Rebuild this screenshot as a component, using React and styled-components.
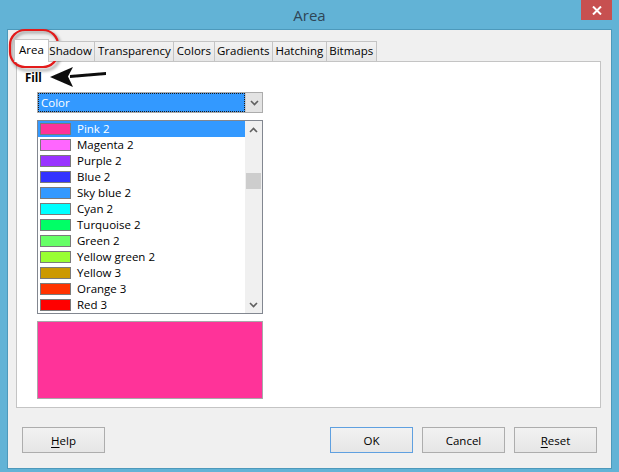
import React from "react";
import styled, { createGlobalStyle } from "styled-components";

const GlobalStyle = createGlobalStyle`
  html, body {
    margin: 0;
    padding: 0;
    background: #ffffff;
  }
  body {
    font-family: "Open Sans", "Noto Sans", sans-serif;
    font-size: 11.5px;
  }
`;

const tabs = ["Area", "Shadow", "Transparency", "Colors", "Gradients", "Hatching", "Bitmaps"];

const colors = [
  { name: "Pink 2", hex: "#ff3399" },
  { name: "Magenta 2", hex: "#ff66ff" },
  { name: "Purple 2", hex: "#9933ff" },
  { name: "Blue 2", hex: "#3333ff" },
  { name: "Sky blue 2", hex: "#3399ff" },
  { name: "Cyan 2", hex: "#00ffff" },
  { name: "Turquoise 2", hex: "#00ff66" },
  { name: "Green 2", hex: "#66ff66" },
  { name: "Yellow green 2", hex: "#99ff33" },
  { name: "Yellow 3", hex: "#cc9900" },
  { name: "Orange 3", hex: "#ff3300" },
  { name: "Red 3", hex: "#ff0000" },
];

function Chevron({ up }) {
  return (
    <svg width="9" height="6" viewBox="0 0 9 6">
      <polyline
        points={up ? "1,5 4.5,1.5 8,5" : "1,1 4.5,4.5 8,1"}
        fill="none"
        stroke="#606060"
        strokeWidth="1.6"
      />
    </svg>
  );
}

function App() {
  const selected = 0;
  return (
    <>
      <GlobalStyle />
      <Window>
        <TitleBar>
          <span />
          <Title>Area</Title>
          <CloseButton>
            <svg width="10" height="9" viewBox="0 0 10 9">
              <path d="M1 0.5 L9 8.5 M9 0.5 L1 8.5" stroke="#fff" strokeWidth="2" />
            </svg>
          </CloseButton>
        </TitleBar>

        <Body>
          <TabStrip>
            {tabs.map((t, i) => (
              <Tab key={t} $active={i === 0}>{t}</Tab>
            ))}
          </TabStrip>

          <Panel>
            <FillLabel>Fill</FillLabel>
            <FillArea>
              <ComboBox>
                <ComboField>Color</ComboField>
                <ComboButton>
                  <Chevron />
                </ComboButton>
              </ComboBox>

              <ListBox>
                <Rows>
                  {colors.map((c, i) => (
                    <Row key={c.name} $selected={i === selected}>
                      <Swatch $color={c.hex} />
                      <RowText>{c.name}</RowText>
                    </Row>
                  ))}
                </Rows>
                <ScrollBar>
                  <ScrollArrow>
                    <Chevron up />
                  </ScrollArrow>
                  <ScrollTrack>
                    <Thumb />
                  </ScrollTrack>
                  <ScrollArrow>
                    <Chevron />
                  </ScrollArrow>
                </ScrollBar>
              </ListBox>

              <Preview $color={colors[selected].hex} />
            </FillArea>
          </Panel>

          <ButtonRow>
            <Button>
              <u>H</u>elp
            </Button>
            <Spacer />
            <Button $default>OK</Button>
            <Button>Cancel</Button>
            <Button>
              <u>R</u>eset
            </Button>
          </ButtonRow>
        </Body>

        <Annotation width="619" height="472" viewBox="0 0 619 472">
          <defs>
            <filter id="soft" x="-20%" y="-20%" width="140%" height="140%">
              <feGaussianBlur stdDeviation="0.6" />
            </filter>
            <filter id="shadow" x="-20%" y="-20%" width="140%" height="140%">
              <feGaussianBlur stdDeviation="1.4" />
            </filter>
          </defs>
          <rect x="12" y="32" width="48" height="38" rx="15" fill="none" stroke="#000" strokeOpacity="0.35" strokeWidth="2.5" filter="url(#shadow)" />
          <rect x="10" y="30" width="48" height="37" rx="15" fill="none" stroke="#e31b1b" strokeWidth="2.2" />
          <g filter="url(#soft)">
            <path d="M106 72 L70 75 L70 78 L106 75 Z" fill="#111" />
            <path d="M50 77 L73 67 L68 76.5 L73 87 Z" fill="#111" />
          </g>
        </Annotation>
      </Window>
    </>
  );
}

const Window = styled.div`
  position: relative;
  width: 619px;
  height: 472px;
  box-sizing: border-box;
  background: #62b3d6;
  display: flex;
  flex-direction: column;
  overflow: hidden;
`;

const TitleBar = styled.div`
  height: 30px;
  flex: none;
  display: grid;
  grid-template-columns: 1fr auto 1fr;
  align-items: start;
`;

const Title = styled.div`
  font-family: "Open Sans", "Noto Sans", sans-serif;
  font-size: 15px;
  line-height: 30px;
  color: #2f4656;
`;

const CloseButton = styled.div`
  justify-self: end;
  margin-right: 7px;
  width: 31px;
  height: 20px;
  background: #c75050;
  display: flex;
  align-items: center;
  justify-content: center;
`;

const Body = styled.div`
  flex: 1;
  margin: 0 8px 4px 8px;
  background: #f0f0f0;
  box-shadow: 0 0 0 1px #4d99bb;
  display: flex;
  flex-direction: column;
  padding: 10px 10px 15px 8px;
`;

const TabStrip = styled.div`
  display: flex;
  align-items: flex-end;
  height: 22px;
  margin-bottom: -1px;
  position: relative;
  z-index: 1;
`;

const Tab = styled.div`
  box-sizing: border-box;
  height: ${(p) => (p.$active ? "23px" : "20px")};
  margin: ${(p) => (p.$active ? "0 -2px 0 -2px" : "0 0 1px -1px")};
  padding: ${(p) => (p.$active ? "2px 4px 0 4px" : "1px 2.5px 0 2.5px")};
  border: 1px solid #c4c4c4;
  border-bottom: none;
  background: ${(p) => (p.$active ? "#ffffff" : "linear-gradient(#f2f2f2, #e6e6e6)")};
  color: #000;
  line-height: 16px;
  white-space: nowrap;
  position: relative;
  z-index: ${(p) => (p.$active ? 2 : 1)};
  &:first-child {
    margin-left: -2px;
  }
`;

const Panel = styled.div`
  box-sizing: border-box;
  height: 347px;
  background: #ffffff;
  border: 1px solid #c4c4c4;
  padding: 8px 0 0 8px;
`;

const FillLabel = styled.div`
  font-weight: 700;
  line-height: 16px;
`;

const FillArea = styled.div`
  margin: 6px 0 0 12px;
  width: 226px;
  display: flex;
  flex-direction: column;
  gap: 7px;
`;

const ComboBox = styled.div`
  box-sizing: border-box;
  height: 21px;
  display: flex;
  border: 1px solid #acacac;
  background: #fff;
`;

const ComboField = styled.div`
  flex: 1;
  background: #3399ff;
  color: #fff;
  outline: 1px dotted #1a1a1a;
  outline-offset: -1px;
  padding-left: 3px;
  line-height: 19px;
`;

const ComboButton = styled.div`
  width: 16px;
  background: #e3e3e3;
  border-left: 1px solid #c9c9c9;
  display: flex;
  align-items: center;
  justify-content: center;
`;

const ListBox = styled.div`
  box-sizing: border-box;
  height: 194px;
  border: 1px solid #828790;
  display: flex;
  background: #fff;
`;

const Rows = styled.div`
  flex: 1;
  display: flex;
  flex-direction: column;
`;

const Row = styled.div`
  height: 16px;
  display: flex;
  align-items: center;
  gap: 6px;
  padding-left: 2px;
  background: ${(p) => (p.$selected ? "#3399ff" : "transparent")};
  color: ${(p) => (p.$selected ? "#ffffff" : "#000000")};
`;

const Swatch = styled.div`
  box-sizing: border-box;
  width: 31px;
  height: 12px;
  background: ${(p) => p.$color};
  border: 1px solid #7a7a7a;
`;

const RowText = styled.span`
  line-height: 16px;
  white-space: nowrap;
`;

const ScrollBar = styled.div`
  width: 17px;
  background: #f0f0f0;
  display: flex;
  flex-direction: column;
`;

const ScrollArrow = styled.div`
  height: 17px;
  display: flex;
  align-items: center;
  justify-content: center;
`;

const ScrollTrack = styled.div`
  flex: 1;
  padding-top: 35px;
  display: flex;
  justify-content: center;
`;

const Thumb = styled.div`
  width: 15px;
  height: 16px;
  background: #cdcdcd;
`;

const Preview = styled.div`
  box-sizing: border-box;
  height: 78px;
  background: ${(p) => p.$color};
  border: 1px solid #a8a8a8;
`;

const ButtonRow = styled.div`
  margin-top: 19px;
  padding: 0 4px 0 6px;
  display: flex;
  gap: 9px;
`;

const Spacer = styled.div`
  flex: 1;
`;

const Button = styled.div`
  box-sizing: border-box;
  width: 83px;
  height: 26px;
  border: 1px solid ${(p) => (p.$default ? "#5fa0e0" : "#adadad")};
  background: linear-gradient(#f2f2f2, #e6e6e6);
  display: flex;
  align-items: center;
  justify-content: center;
  color: #000;
  u {
    text-decoration-thickness: 1px;
    text-underline-offset: 2px;
  }
`;

const Annotation = styled.svg`
  position: absolute;
  left: 0;
  top: 0;
  pointer-events: none;
`;

export default App;
